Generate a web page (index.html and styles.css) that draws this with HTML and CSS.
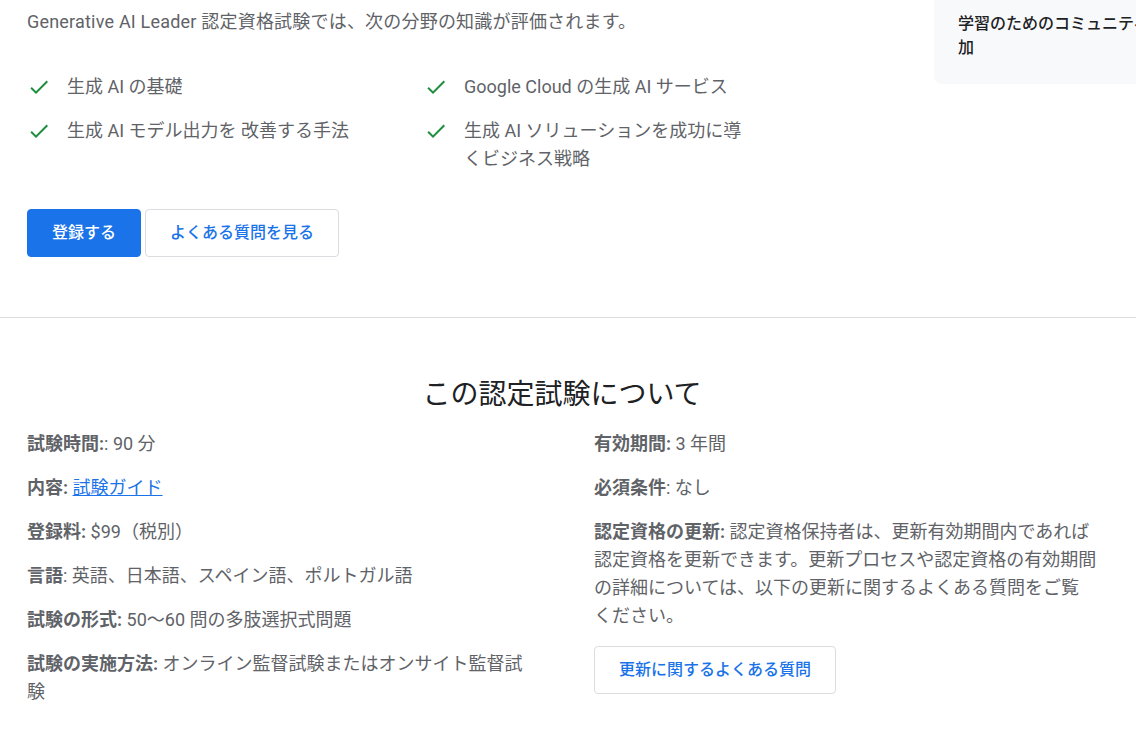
FILE: index.html
```html
<!DOCTYPE html>
<html lang="ja">
<head>
    <meta charset="UTF-8">
    <meta name="viewport" content="width=device-width, initial-scale=1.0">
    <title>Generative AI Leader</title>
    <link rel="stylesheet" href="styles.css">
</head>
<body>
    <div class="page">
        <div class="top">
            <div class="main">
                <p class="intro">Generative AI Leader 認定資格試験では、次の分野の知識が評価されます。</p>
                <ul class="topics">
                    <li>
                        <svg class="check" viewBox="0 0 24 24" width="24" height="24"><path d="M9 16.17L4.83 12l-1.42 1.41L9 19 21 7l-1.41-1.41z"/></svg>
                        <span>生成 AI の基礎</span>
                    </li>
                    <li>
                        <svg class="check" viewBox="0 0 24 24" width="24" height="24"><path d="M9 16.17L4.83 12l-1.42 1.41L9 19 21 7l-1.41-1.41z"/></svg>
                        <span>Google Cloud の生成 AI サービス</span>
                    </li>
                    <li>
                        <svg class="check" viewBox="0 0 24 24" width="24" height="24"><path d="M9 16.17L4.83 12l-1.42 1.41L9 19 21 7l-1.41-1.41z"/></svg>
                        <span>生成 AI モデル出力を 改善する手法</span>
                    </li>
                    <li>
                        <svg class="check" viewBox="0 0 24 24" width="24" height="24"><path d="M9 16.17L4.83 12l-1.42 1.41L9 19 21 7l-1.41-1.41z"/></svg>
                        <span>生成 AI ソリューションを成功に導くビジネス戦略</span>
                    </li>
                </ul>
                <div class="actions">
                    <a class="btn btn-primary" href="#">登録する</a>
                    <a class="btn btn-outline" href="#">よくある質問を見る</a>
                </div>
            </div>
            <aside class="side">
                <div class="side-card">学習のためのコミュニティに参加</div>
            </aside>
        </div>

        <hr class="divider">

        <section class="about">
            <h2 class="about-title">この認定試験について</h2>
            <div class="about-grid">
                <div class="about-col">
                    <p><b>試験時間:</b>: 90 分</p>
                    <p><b>内容:</b> <a class="link" href="#">試験ガイド</a></p>
                    <p><b>登録料:</b> $99（税別）</p>
                    <p><b>言語</b>: 英語、日本語、スペイン語、ポルトガル語</p>
                    <p><b>試験の形式:</b> 50〜60 問の多肢選択式問題</p>
                    <p><b>試験の実施方法:</b> オンライン監督試験またはオンサイト監督試験</p>
                </div>
                <div class="about-col">
                    <p><b>有効期間:</b> 3 年間</p>
                    <p><b>必須条件</b>: なし</p>
                    <p><b>認定資格の更新:</b> 認定資格保持者は、更新有効期間内であれば認定資格を更新できます。更新プロセスや認定資格の有効期間の詳細については、以下の更新に関するよくある質問をご覧<span class="nowrap">ください。</span></p>
                    <a class="btn btn-outline" href="#">更新に関するよくある質問</a>
                </div>
            </div>
        </section>
    </div>
</body>
</html>
```

FILE: styles.css
```css
body {
    margin: 0;
    font-family: Roboto, "Noto Sans CJK JP", sans-serif;
    font-size: 18px;
    line-height: 28px;
    color: #5f6368;
    background: #fff;
}
.page {
    overflow: hidden;
}
.top {
    display: grid;
    grid-template-columns: 907px 272px;
    padding-left: 27px;
}
.main {
    padding-top: 8px;
}
.intro {
    margin: 0 0 37px;
    letter-spacing: 0.2px;
}
.topics {
    list-style: none;
    margin: 0;
    padding: 0;
    display: grid;
    grid-template-columns: 330px 330px;
    column-gap: 67px;
    row-gap: 16px;
}
.topics li {
    display: flex;
    align-items: flex-start;
    gap: 16px;
}
.check {
    flex-shrink: 0;
    fill: #1e8e3e;
    margin-top: 2px;
}
.actions {
    display: flex;
    gap: 4px;
    margin-top: 36px;
}
.btn {
    display: inline-flex;
    align-items: center;
    justify-content: center;
    height: 48px;
    box-sizing: border-box;
    padding: 0 24px;
    border: 1px solid #dadce0;
    border-radius: 4px;
    font-size: 16px;
    font-weight: 500;
    text-decoration: none;
}
.btn-primary {
    background-color: #1a73e8;
    border-color: #1a73e8;
    color: #fff;
}
.btn-outline {
    background-color: #fff;
    color: #1a73e8;
}
.nowrap {
    white-space: nowrap;
}
.side-card {
    background-color: #f8f9fa;
    border-radius: 0 0 0 8px;
    padding: 12px 24px 24px;
    font-size: 16px;
    line-height: 24px;
    font-weight: 500;
    color: #202124;
}
.divider {
    border: none;
    border-top: 1px solid #dadce0;
    margin: 60px 0 0;
}
.about {
    padding: 59px 39px 40px 27px;
}
.about-title {
    margin: 0 0 17px;
    text-align: center;
    font-size: 28px;
    line-height: 36px;
    font-weight: 400;
    color: #202124;
}
.about-grid {
    display: grid;
    grid-template-columns: 500px 510px;
    column-gap: 67px;
}
.about-col p {
    margin: 0 0 16px;
}
.about-col b {
    font-weight: 700;
}
.link {
    color: #1a73e8;
}
```
